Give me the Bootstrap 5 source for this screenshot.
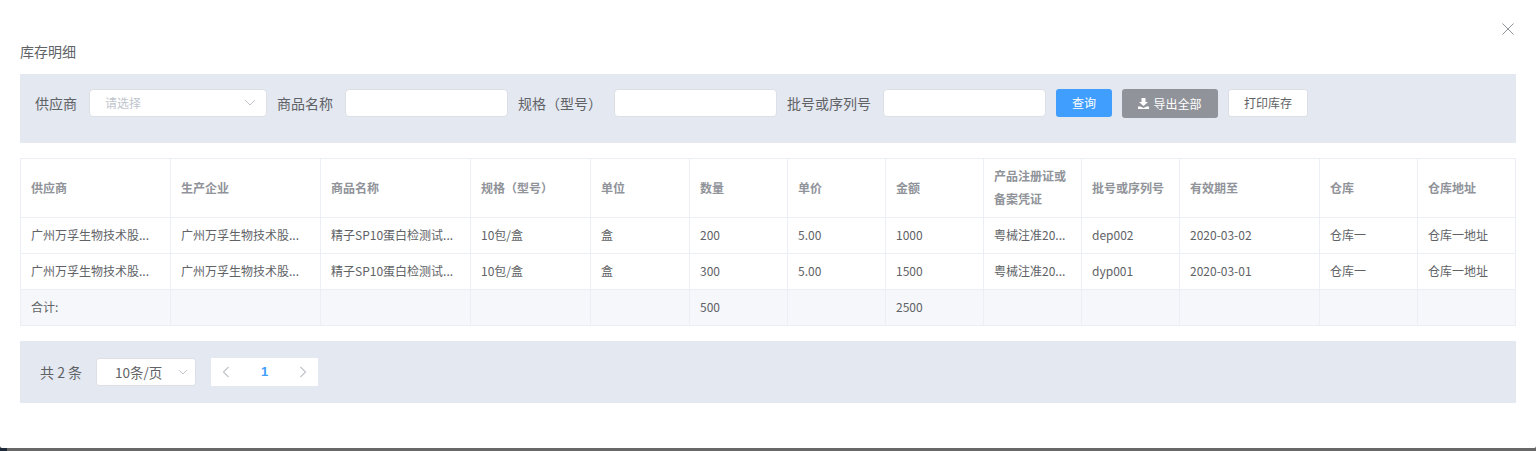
<!DOCTYPE html>
<html lang="zh">
<head>
<meta charset="utf-8">
<title>库存明细</title>
<link rel="stylesheet" href="https://cdn.jsdelivr.net/npm/bootstrap@5.3.0/dist/css/bootstrap.min.css">
<style>
html,body{height:451px;overflow:hidden;background:linear-gradient(90deg,#1f2a38 0,#1f2a38 7px,#686868 7px)}
body{font-family:"Noto Sans CJK SC","Liberation Sans",sans-serif;font-size:12px;color:#606266}
.sheet{width:1536px;height:448px;background:#fff;border-radius:0 0 2px 2px;padding:0 20px;display:flow-root}
.sheet-close{position:absolute;left:1502px;top:23px;width:12px;height:12px;line-height:0}
.sheet-title{margin-top:41px;height:33px;font-size:14px;line-height:20px;color:#606266}
.filter-bar{height:69px;background:#e4e8f1;padding:15px 15px 0;display:flex;align-items:flex-start}
.f-label{font-size:14px;line-height:28px;height:28px;color:#606266;white-space:nowrap}
.f-input{height:28px;background:#fff;border:1px solid #dcdfe6;border-radius:4px;margin:0 10px 0 12px}
.f-sel{width:178px;position:relative;padding-left:15px;font-size:12px;line-height:26px;color:#c0c4cc}
.f-sel svg{position:absolute;right:10px;top:9px}
.w163{width:163px}
.act{height:28px;border-radius:3px;font-size:12px;line-height:28px;text-align:center;padding:0;border:0;white-space:nowrap}
.act-blue{width:56px;background:#409eff;color:#fff}
.act-grey{width:96px;height:29px;background:#909399;color:#fff;margin-left:10px;display:flex;align-items:center;justify-content:center;gap:4px}
.act-white{width:80px;background:#fff;color:#606266;border:1px solid #dcdfe6;line-height:26px;margin-left:10px}
.stock-table{width:1495px;margin-top:15px;table-layout:fixed;border-collapse:collapse;font-size:12px;color:#606266}
.stock-table th,.stock-table td{border:1px solid #ebeef5;padding:0 10px 2px;height:36px;vertical-align:middle;white-space:nowrap;overflow:hidden;background:#fff;line-height:23px}
.stock-table thead th{height:59px;color:#909399;font-weight:700;white-space:normal}
.stock-table tfoot td{background:#f5f7fa}
.pager-bar{height:62px;margin-top:15px;background:#e4e8f1;padding-left:20px;display:flex;align-items:center;font-size:14px;color:#606266}
.pg-size{width:100px;height:28px;background:#fff;border:1px solid #dcdfe6;border-radius:3px;margin-left:14px;position:relative;line-height:26px;padding-left:18px;font-size:13.500px}
.pg-size svg{position:absolute;right:7px;top:10px}
.pg-nums{width:107px;height:28px;margin-left:15px;background:#fff;display:flex;align-items:center;justify-content:space-between;padding:0 11px}
.pg-cur{color:#409eff;font-weight:700;font-size:13px;font-family:"Liberation Sans",sans-serif}
</style>
</head>
<body>
<div class="sheet">
  <div class="sheet-close"><svg width="12" height="12" viewBox="0 0 12 12"><path d="M.5.5l11 11M11.500.5l-11 11" stroke="#909399" fill="none"/></svg></div>
  <div class="sheet-title">库存明细</div>
  <div class="filter-bar">
    <span class="f-label">供应商</span>
    <div class="f-input f-sel">请选择<svg width="12" height="7" viewBox="0 0 12 7"><path d="M1 1l5 5 5-5" stroke="#c0c4cc" fill="none"/></svg></div>
    <span class="f-label">商品名称</span>
    <div class="f-input w163"></div>
    <span class="f-label">规格（型号）</span>
    <div class="f-input w163"></div>
    <span class="f-label">批号或序列号</span>
    <div class="f-input w163"></div>
    <button class="btn act act-blue">查询</button>
    <button class="btn act act-grey"><svg width="11" height="11" viewBox="0 0 11 11"><path d="M3.500 0h4v4h2.500L5.500 8 1 4h2.500zM0 8.500h2.500l3 1.500 3-1.500H11V11H0z" fill="#fff"/></svg>导出全部</button>
    <button class="btn act act-white">打印库存</button>
  </div>
  <table class="stock-table">
    <colgroup><col style="width:150px"><col style="width:150px"><col style="width:150px"><col style="width:120px"><col style="width:99px"><col style="width:98px"><col style="width:98px"><col style="width:98px"><col style="width:98px"><col style="width:98px"><col style="width:140px"><col style="width:98px"><col style="width:98px"></colgroup>
    <thead><tr><th>供应商</th><th>生产企业</th><th>商品名称</th><th>规格（型号）</th><th>单位</th><th>数量</th><th>单价</th><th>金额</th><th>产品注册证或备案凭证</th><th>批号或序列号</th><th>有效期至</th><th>仓库</th><th>仓库地址</th></tr></thead>
    <tbody>
      <tr><td>广州万孚生物技术股...</td><td>广州万孚生物技术股...</td><td>精子SP10蛋白检测试...</td><td>10包/盒</td><td>盒</td><td>200</td><td>5.00</td><td>1000</td><td>粤械注准20...</td><td>dep002</td><td>2020-03-02</td><td>仓库一</td><td>仓库一地址</td></tr>
      <tr><td>广州万孚生物技术股...</td><td>广州万孚生物技术股...</td><td>精子SP10蛋白检测试...</td><td>10包/盒</td><td>盒</td><td>300</td><td>5.00</td><td>1500</td><td>粤械注准20...</td><td>dyp001</td><td>2020-03-01</td><td>仓库一</td><td>仓库一地址</td></tr>
    </tbody>
    <tfoot><tr><td>合计:</td><td></td><td></td><td></td><td></td><td>500</td><td></td><td>2500</td><td></td><td></td><td></td><td></td><td></td></tr></tfoot>
  </table>
  <div class="pager-bar">
    <span>共 2 条</span>
    <div class="pg-size">10条/页<svg width="10" height="6" viewBox="0 0 10 6"><path d="M1 1l4 4 4-4" stroke="#c0c4cc" fill="none"/></svg></div>
    <div class="pg-nums">
      <svg width="8" height="12" viewBox="0 0 8 12"><path d="M6.500 1l-5 5 5 5" stroke="#c0c4cc" stroke-width="1.200" fill="none"/></svg>
      <span class="pg-cur">1</span>
      <svg width="8" height="12" viewBox="0 0 8 12"><path d="M1.500 1l5 5-5 5" stroke="#c0c4cc" stroke-width="1.200" fill="none"/></svg>
    </div>
  </div>
</div>
<script src="https://cdn.jsdelivr.net/npm/bootstrap@5.3.0/dist/js/bootstrap.bundle.min.js"></script>
</body>
</html>
